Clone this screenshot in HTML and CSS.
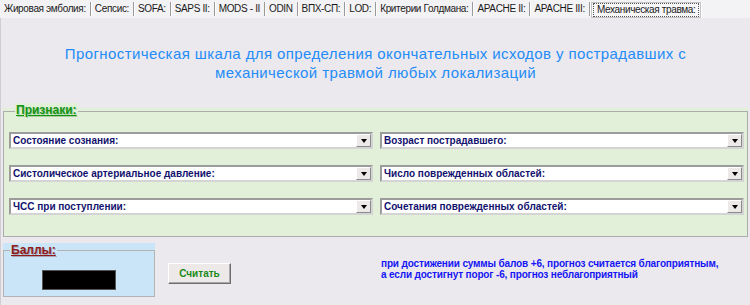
FILE: index.html
```html
<!DOCTYPE html>
<html lang="ru">
<head>
  <meta charset="UTF-8">
  <title>Механическая травма</title>
  <link rel="stylesheet" href="styles.css">
</head>
<body>

  <!-- Tab strip -->
  <div class="tabs">
    <span class="tab">Жировая эмболия:</span>
    <span class="tab">Сепсис:</span>
    <span class="tab">SOFA:</span>
    <span class="tab">SAPS II:</span>
    <span class="tab">MODS - II</span>
    <span class="tab">ODIN</span>
    <span class="tab">ВПХ-СП:</span>
    <span class="tab">LOD:</span>
    <span class="tab">Критерии Голдмана:</span>
    <span class="tab">APACHE II:</span>
    <span class="tab">APACHE III:</span>
    <span class="tab active"><span class="focus">Механическая травма:</span></span>
  </div>

  <div class="page">
    <h1 class="title">Прогностическая шкала для определения окончательных исходов у пострадавших с<br>механической травмой любых локализаций</h1>

    <!-- Signs -->
    <div class="group">
      <div class="frame">
        <div class="legend">Признаки:</div>
        <div class="fields">
          <div class="combo"><span class="label">Состояние сознания:</span><span class="arrow"></span></div>
          <div class="combo"><span class="label">Возраст пострадавшего:</span><span class="arrow"></span></div>
          <div class="combo"><span class="label">Систолическое артериальное давление:</span><span class="arrow"></span></div>
          <div class="combo"><span class="label">Число поврежденных областей:</span><span class="arrow"></span></div>
          <div class="combo"><span class="label">ЧСС при поступлении:</span><span class="arrow"></span></div>
          <div class="combo"><span class="label">Сочетания поврежденных областей:</span><span class="arrow"></span></div>
        </div>
      </div>
    </div>

    <div class="bottom">
      <div class="score">
        <div class="score-frame">
          <div class="legend red">Баллы:</div>
          <div class="result"></div>
        </div>
      </div>
      <button type="button" class="btn">Считать</button>
      <p class="note">при достижении суммы балов +6, прогноз считается благоприятным,<br>а если достигнут порог -6, прогноз неблагоприятный</p>
    </div>
  </div>

</body>
</html>
```

FILE: styles.css
```css
* {
  box-sizing: border-box;
}

body {
  margin: 0;
  width: 750px;
  height: 305px;
  overflow: hidden;
  background: #ebe9ed;
  font-family: "Liberation Sans", Arial, sans-serif;
}

/* tabs */
.tabs {
  display: flex;
  height: 18px;
  padding: 2px 0 0 1px;
  background: #f3f2f4;
  font-size: 10px;
  letter-spacing: -0.35px;
  color: #1a1a1a;
  white-space: nowrap;
}

.tab {
  flex-shrink: 0;
  height: 14px;
  padding: 0 4px 0 3px;
  line-height: 14px;
  border-right: 1px solid #9a9a9a;
  box-shadow: 1px 0 0 #fff;
  margin-right: 1px;
}

.tab.active {
  padding: 0 1px;
  height: 16px;
  border: 1px solid #c4c4c4;
  background: #f7f6f8;
}

.tab .focus {
  display: block;
  padding: 0 3px;
  line-height: 12px;
  border: 1px dotted #555;
}

/* page */
.page {
  height: 287px;
  overflow: hidden;
  border-left: 1px solid #cfcdd1;
}

.title {
  margin: 26px 0 0;
  text-align: center;
  font-size: 15px;
  font-weight: normal;
  line-height: 19px;
  letter-spacing: 0.4px;
  color: #238cf8;
}

.group {
  margin: 26px 2px 0 2px;
  padding-top: 3px;
  background: #e2efd9;
}

.frame {
  border: 1px solid #acacac;
  padding: 0 3px 21px 5px;
}

.legend {
  display: block;
  width: max-content;
  margin: -9px 0 0 6px;
  padding: 0 1px;
  font-size: 12px;
  font-weight: bold;
  line-height: 14px;
  text-decoration: underline;
  color: #139313;
  text-shadow: 1px 1px 0 #a9cfa0;
  background: #e2efd9;
}

.legend.red {
  margin: -8px 0 0 6px;
  color: #8e1c1c;
  text-shadow: 1px 1px 0 #a6a6b4;
  background: #cae5f7;
}

.fields {
  display: grid;
  grid-template-columns: 1fr 1fr;
  column-gap: 7px;
  row-gap: 16px;
  margin-top: 15px;
}

.combo {
  display: flex;
  align-items: center;
  height: 17px;
  padding-left: 2px;
  background: #fff;
  border: 2px solid;
  border-color: #9c9c9c #d4d4d4 #d4d4d4 #9c9c9c;
  font-size: 10px;
  font-weight: bold;
  color: #12126e;
}

.combo .label {
  flex: 1;
}

.arrow {
  display: flex;
  align-items: center;
  justify-content: center;
  width: 15px;
  height: 13px;
  background: #ece9e8;
  border: 1px solid;
  border-color: #fff #8a8a8a #8a8a8a #fff;
}

.arrow::after {
  content: "";
  border-left: 3.5px solid transparent;
  border-right: 3.5px solid transparent;
  border-top: 4px solid #000;
}

/* bottom row */
.bottom {
  display: flex;
  align-items: flex-start;
  margin-top: 6px;
}

.score {
  width: 152px;
  margin-left: 2px;
  padding-top: 7px;
  background: #cae5f7;
}

.score-frame {
  height: 47px;
  border: 1px solid #b3b3b3;
}

.result {
  width: 74px;
  height: 20px;
  margin: 13px auto 0;
  background: #000;
  border: 1px solid #555;
}

.btn {
  width: 63px;
  height: 21px;
  margin: 20px 0 0 13px;
  padding: 0;
  background: #ece9e8;
  border: 1px solid;
  border-color: #fff #6e6e6e #6e6e6e #fff;
  box-shadow: inset -1px -1px 0 #a8a8a8;
  font-family: "Liberation Sans", Arial, sans-serif;
  font-size: 10px;
  font-weight: bold;
  color: #1b8a1b;
}

.note {
  margin: 15px 0 0 150px;
  font-size: 10px;
  font-weight: bold;
  line-height: 11px;
  letter-spacing: -0.15px;
  color: #1616f5;
}
```
